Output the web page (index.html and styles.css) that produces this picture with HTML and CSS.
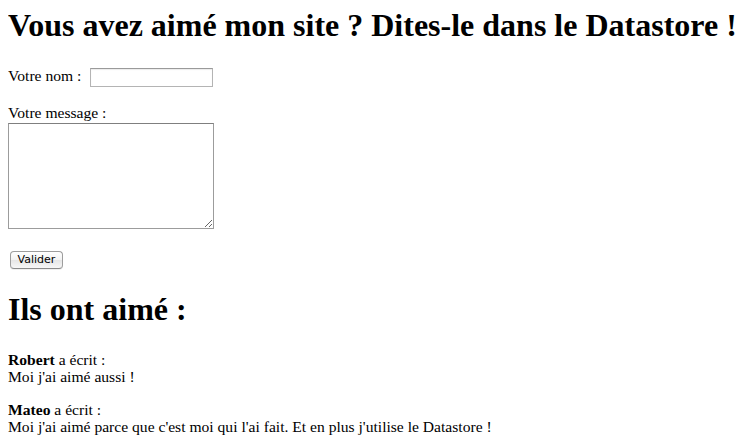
FILE: index.html
```html
<!DOCTYPE html>
<html lang="fr">
<head>
<meta charset="utf-8">
<title>Livre d'or</title>
<link rel="stylesheet" href="styles.css">
</head>
<body>
<h1 class="title">Vous avez aimé mon site ? Dites-le dans le Datastore !</h1>
<form class="form">
  <div class="row row-name">
    <label class="label" for="nom">Votre nom :</label>
    <input class="name-input" type="text" id="nom" name="nom">
  </div>
  <div class="row row-message">
    <label class="label block" for="message">Votre message :</label>
    <textarea class="message-input" id="message" name="message"></textarea>
  </div>
  <div class="row row-submit">
    <button class="submit" type="submit">Valider</button>
  </div>
</form>
<h2 class="subtitle">Ils ont aimé :</h2>
<div class="entry"><b>Robert</b> a écrit :<br>Moi j'ai aimé aussi !</div>
<div class="entry"><b>Mateo</b> a écrit :<br>Moi j'ai aimé parce que c'est moi qui l'ai fait. Et en plus j'utilise le Datastore !</div>
</body>
</html>
```

FILE: styles.css
```css
html, body {
  background: #fff;
}
body {
  margin: 7px 8px;
  font-family: "Liberation Serif", "Times New Roman", serif;
  font-size: 15.6px;
  line-height: 17px;
  color: #000;
}
.title {
  margin: 0;
  font-size: 32px;
  line-height: 37px;
  font-weight: bold;
}
.form {
  margin: 0;
}
.row-name {
  margin-top: 23px;
  display: flex;
  align-items: flex-start;
}
.label {
  margin-right: 9px;
}
.block {
  display: block;
  margin-right: 0;
}
.name-input {
  box-sizing: border-box;
  width: 123px;
  height: 19px;
  margin: 1px 0 0;
  padding: 1px 2px;
  border: 1px solid #b4b4b4;
  border-top-color: #9a9a9a;
  box-shadow: inset 0 1px 1px rgba(0, 0, 0, 0.08);
  background: #fff;
  font: 13px "Liberation Sans", sans-serif;
  outline: none;
}
.row-message {
  margin-top: 17px;
}
.message-input {
  display: block;
  box-sizing: border-box;
  width: 206px;
  height: 106px;
  margin: 2px 0 0;
  padding: 2px;
  border: 1px solid #9c9c9c;
  border-top-color: #7f7f7f;
  background: #fff;
  resize: both;
  font: 13px "Liberation Mono", monospace;
  outline: none;
}
.row-submit {
  margin-top: 22px;
  padding-left: 2px;
  display: flex;
}
.submit {
  box-sizing: border-box;
  width: 53px;
  height: 18px;
  margin: 0;
  padding: 0;
  border: 1px solid #9d9d9d;
  border-bottom-color: #8a8a8a;
  border-radius: 4px;
  background: linear-gradient(#ffffff, #f3f3f3 48%, #e6e6e6 52%, #f7f7f7);
  box-shadow: 0 1px 0 rgba(0, 0, 0, 0.06);
  font: 11px/16px "DejaVu Sans", "Liberation Sans", sans-serif;
  color: #000;
}
.subtitle {
  margin: 22px 0 0;
  font-size: 32px;
  line-height: 37px;
  font-weight: bold;
}
.entry {
  margin-top: 23px;
}
.entry + .entry {
  margin-top: 16px;
}
```
